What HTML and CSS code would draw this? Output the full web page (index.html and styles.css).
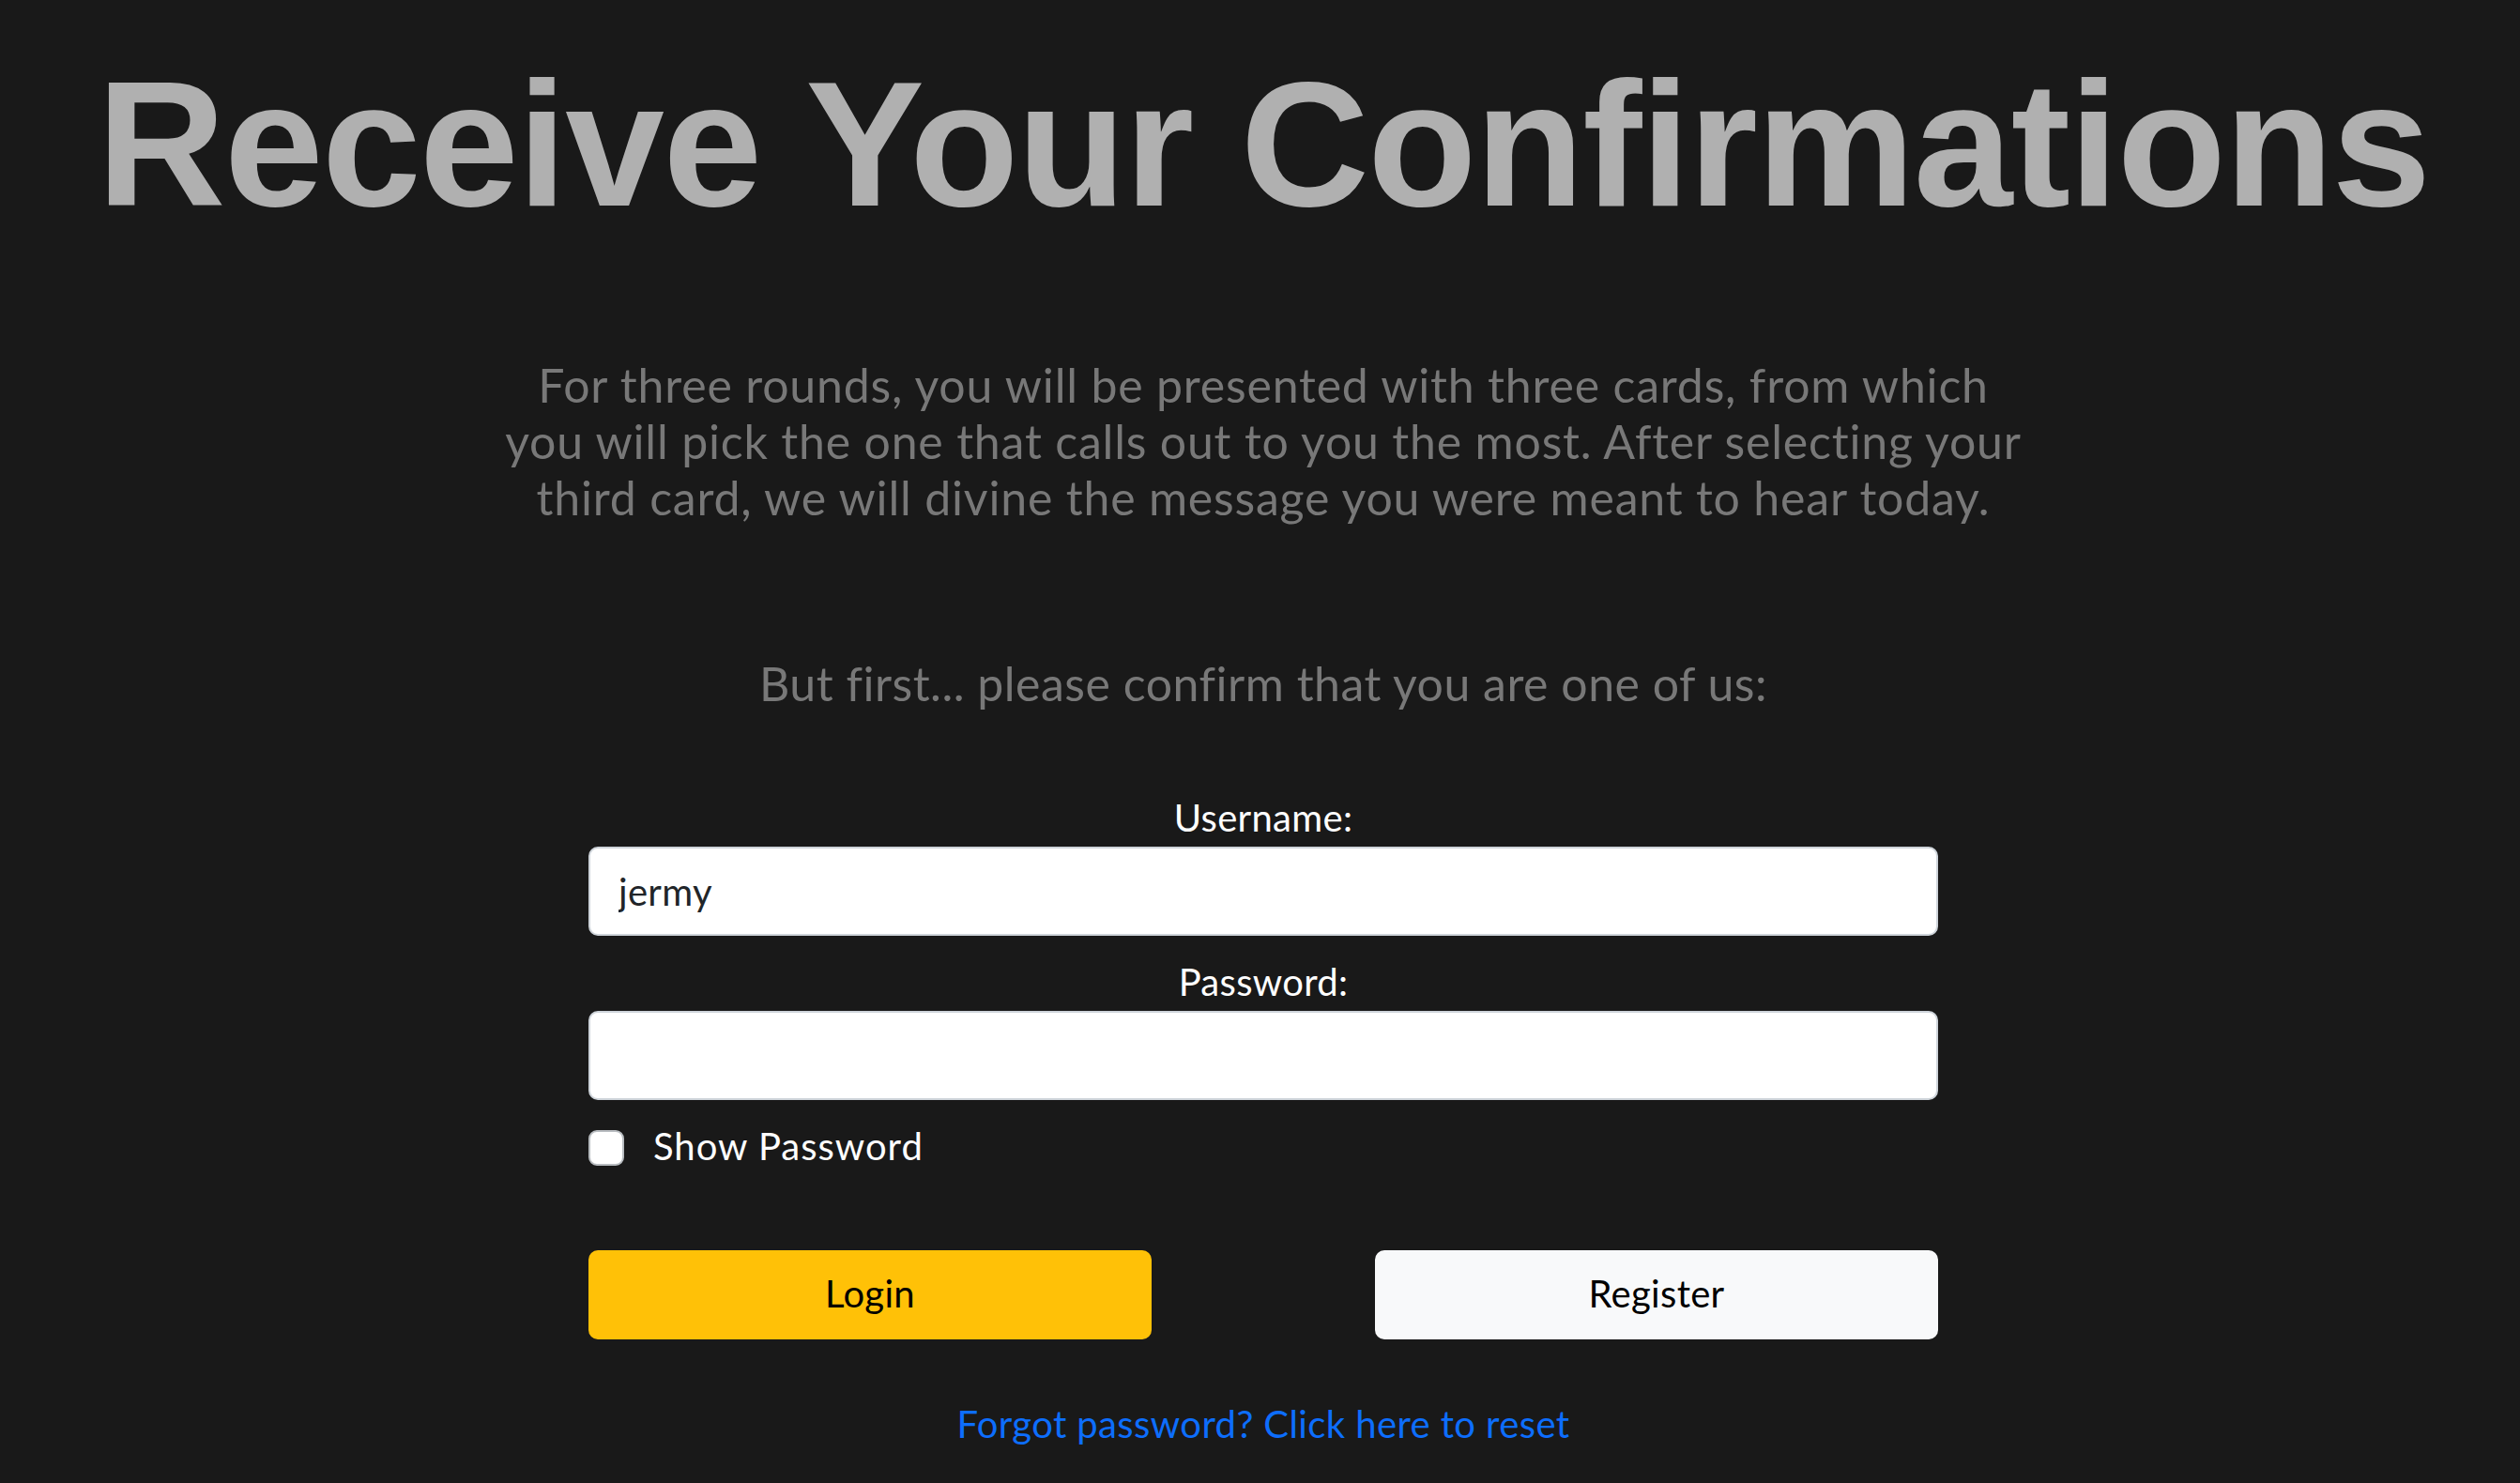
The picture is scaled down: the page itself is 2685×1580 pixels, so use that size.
FILE: index.html
```html
<!DOCTYPE html>
<html lang="en">
<head>
<meta charset="utf-8">
<title>Receive Your Confirmations</title>
<link rel="stylesheet" href="styles.css">
</head>
<body>
<main class="page">
  <h1 class="title">Receive Your Confirmations</h1>
  <p class="intro">For three rounds, you will be presented with three cards, from which you will pick the one that calls out to you the most. After selecting your third card, we will divine the message you were meant to hear today.</p>
  <p class="prompt">But first... please confirm that you are one of us:</p>
  <form class="login-form">
    <label class="field-label" for="username">Username:</label>
    <input class="field-input" id="username" type="text" value="jermy">
    <label class="field-label" for="password">Password:</label>
    <input class="field-input" id="password" type="password">
    <div class="check-row">
      <input class="check-box" id="show" type="checkbox">
      <label class="check-label" for="show">Show Password</label>
    </div>
    <div class="button-row">
      <button class="btn btn-login" type="button">Login</button>
      <button class="btn btn-register" type="button">Register</button>
    </div>
    <a class="reset-link" href="#">Forgot password? Click here to reset</a>
  </form>
</main>
</body>
</html>
```

FILE: styles.css
```css
html, body {
  margin: 0;
  padding: 0;
  background: #191919;
}

body {
  font-family: Lato, "Noto Sans", sans-serif;
  color: #ffffff;
}

.page {
  display: flex;
  flex-direction: column;
  align-items: center;
  padding: 58px 0 0 7px;
  text-align: center;
}

.title {
  margin: 0;
  font-family: "Liberation Sans", Arial, sans-serif;
  font-weight: 700;
  font-size: 190px;
  line-height: 190px;
  letter-spacing: -1.6px;
  color: #b0b0b0;
}

.intro,
.prompt {
  margin: 0;
  font-size: 50px;
  line-height: 60px;
  letter-spacing: 0.8px;
  color: #787878;
}

.intro {
  margin-top: 132px;
  max-width: 1630px;
}

.prompt {
  margin-top: 138px;
  letter-spacing: 0.5px;
}

.login-form {
  width: 1438px;
  margin-top: 83px;
  display: flex;
  flex-direction: column;
}

.field-label {
  display: block;
  font-size: 40px;
  line-height: 60px;
  letter-spacing: 0.3px;
  margin-bottom: 1px;
  color: #ffffff;
}

.field-input {
  box-sizing: border-box;
  height: 95px;
  width: 100%;
  margin: 0 0 19px 0;
  padding: 0 30px;
  border: 2px solid #ced4da;
  border-radius: 10px;
  background: #ffffff;
  font-family: Lato, "Noto Sans", sans-serif;
  font-size: 40px;
  letter-spacing: 0.3px;
  color: #212529;
  outline: none;
}

.check-row {
  display: flex;
  align-items: center;
  margin-top: 0;
  height: 60px;
}

.check-box {
  appearance: none;
  -webkit-appearance: none;
  box-sizing: border-box;
  width: 38px;
  height: 38px;
  margin: 4px 31px 0 0;
  border: 2px solid #b8bcc0;
  border-radius: 9px;
  background: #ffffff;
}

.check-label {
  font-size: 40px;
  line-height: 60px;
  letter-spacing: 1px;
  color: #ffffff;
}

.button-row {
  display: flex;
  justify-content: space-between;
  margin-top: 81px;
}

.btn {
  box-sizing: border-box;
  width: 600px;
  height: 95px;
  padding: 0 0 4px 0;
  border: none;
  border-radius: 10px;
  font-family: Lato, "Noto Sans", sans-serif;
  font-size: 40px;
  letter-spacing: 0.3px;
  color: #000000;
}

.btn-login {
  background: #ffc107;
}

.btn-register {
  background: #f8f9fa;
}

.reset-link {
  align-self: center;
  margin-top: 60px;
  font-size: 40px;
  line-height: 60px;
  letter-spacing: 0.4px;
  color: #0d6efd;
  text-decoration: none;
}
```
